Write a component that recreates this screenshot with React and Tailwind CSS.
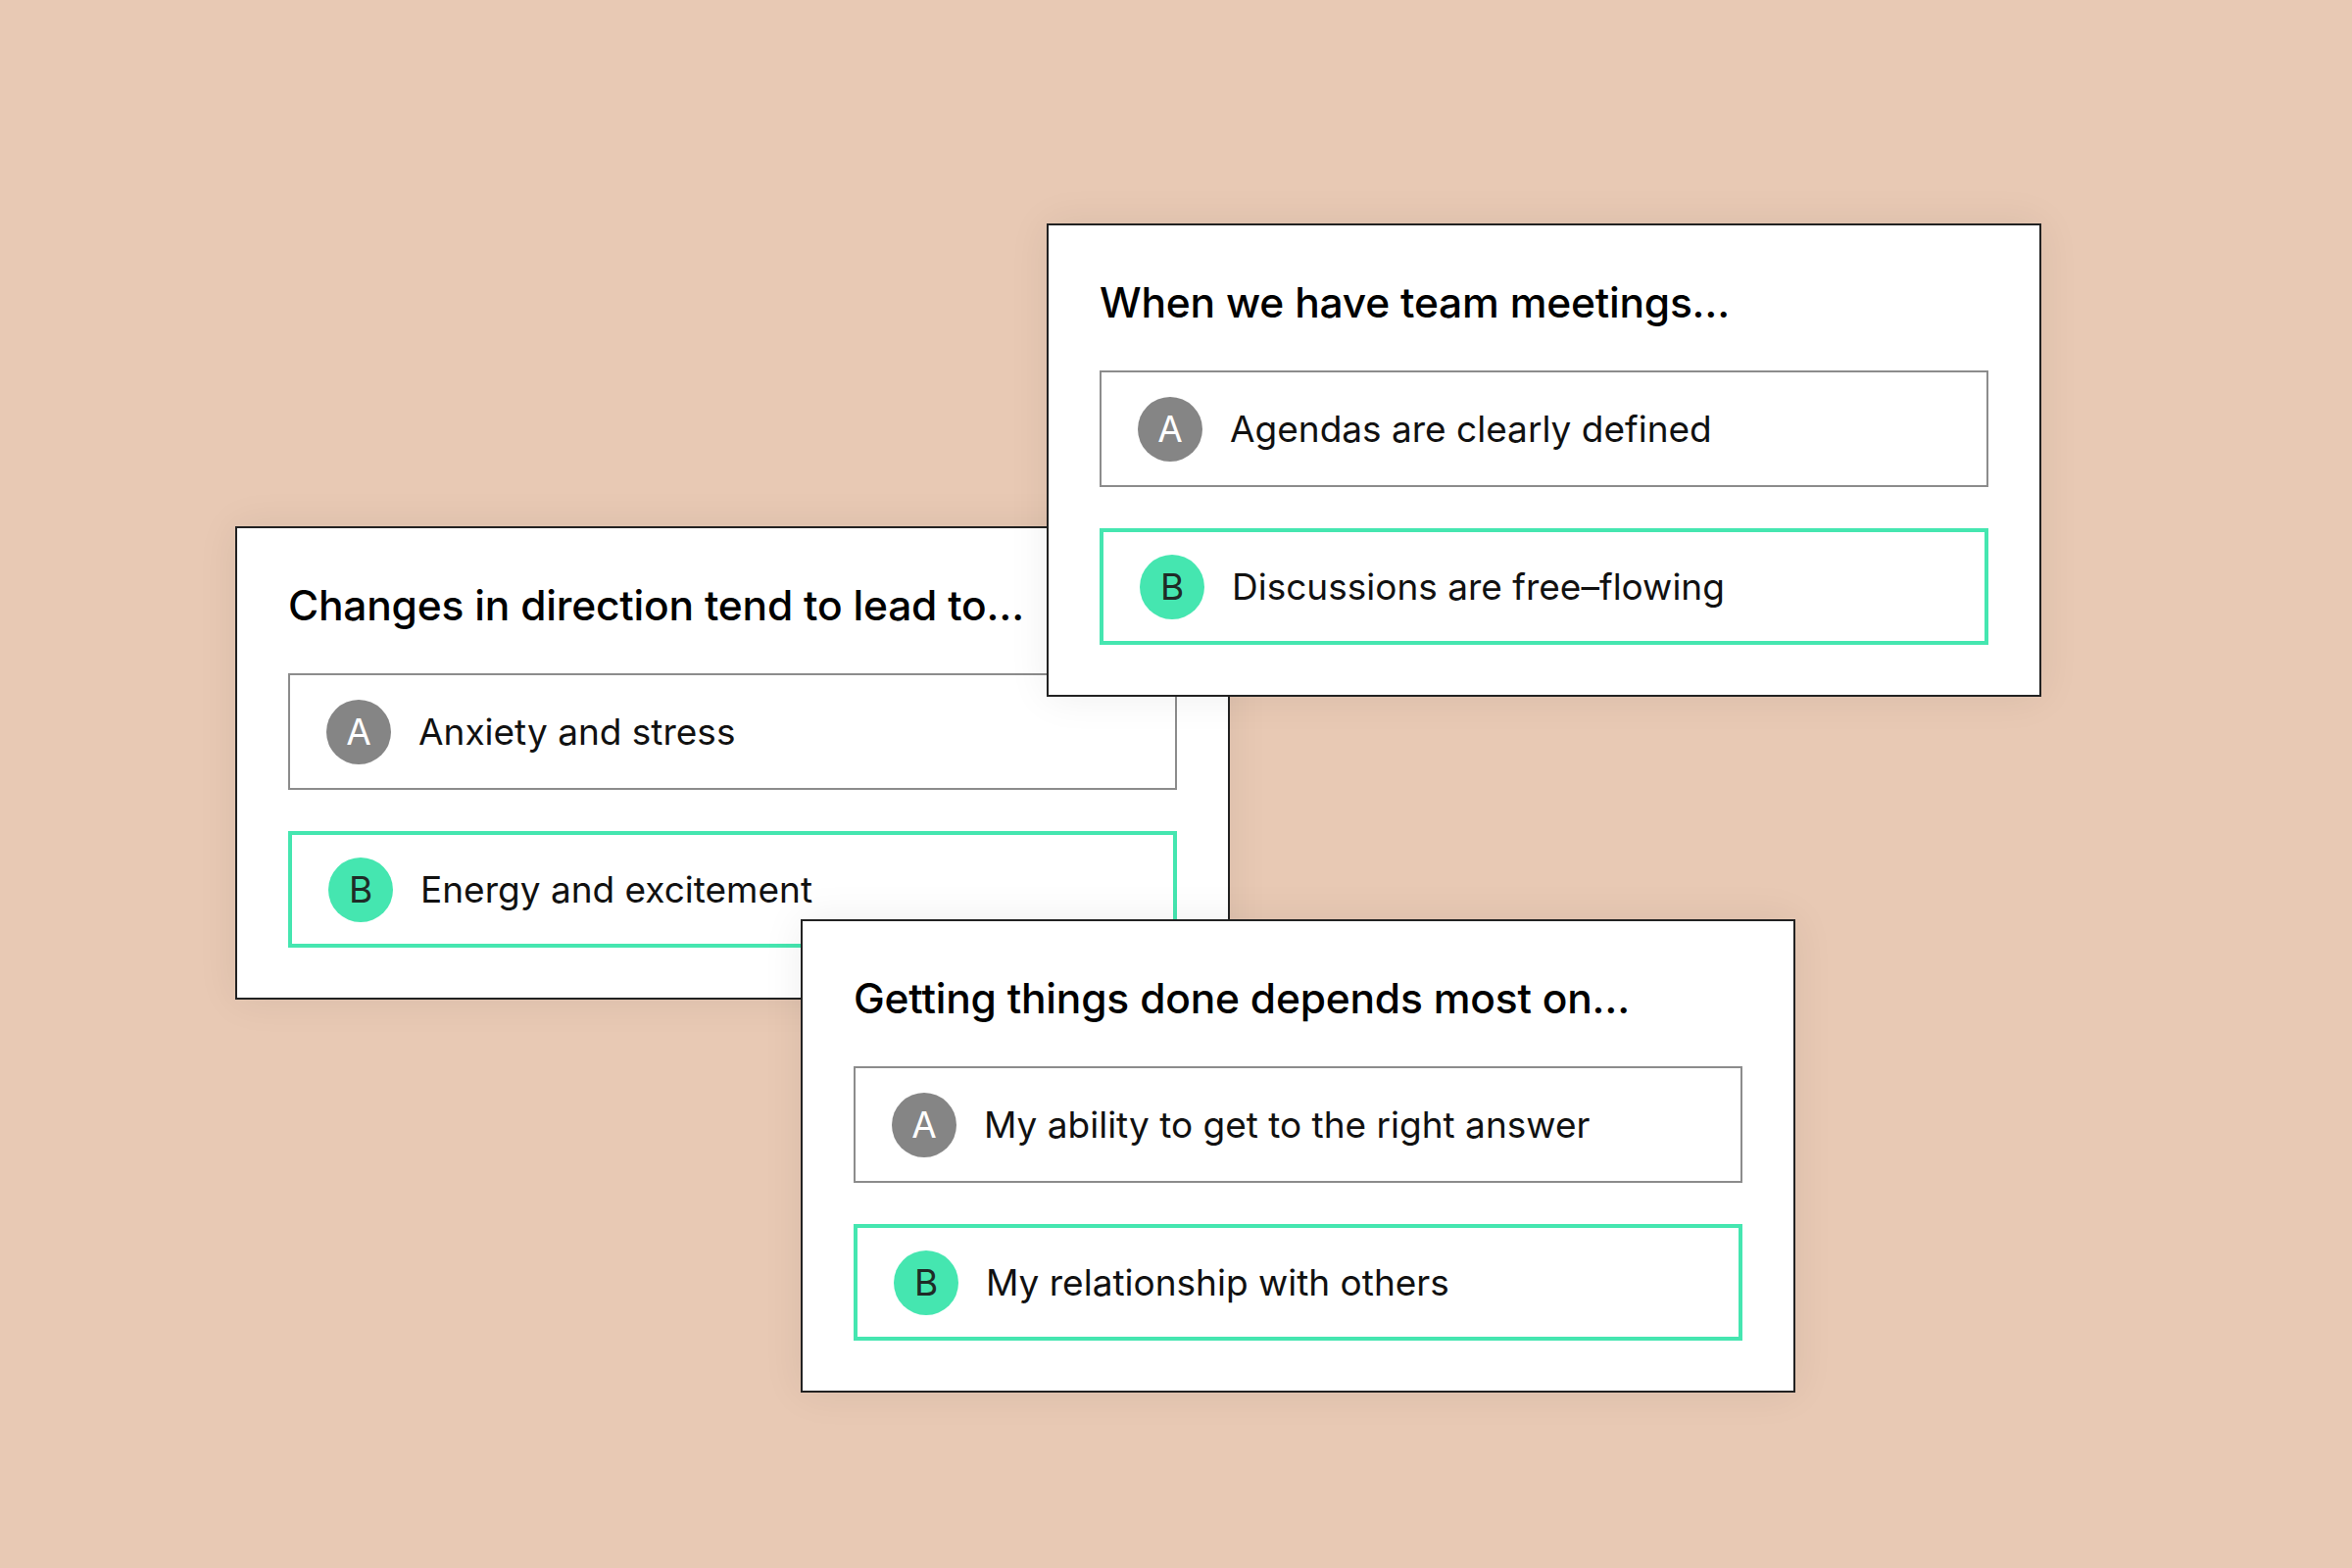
const cards = [
  {
    id: "direction",
    pos: "left-[240px] top-[537px] z-0",
    title: "Changes in direction tend to lead to…",
    a: "Anxiety and stress",
    b: "Energy and excitement",
  },
  {
    id: "meetings",
    pos: "left-[1068px] top-[228px] z-10",
    title: "When we have team meetings…",
    a: "Agendas are clearly defined",
    b: "Discussions are free–flowing",
  },
  {
    id: "done",
    pos: "left-[817px] top-[938px] z-10",
    title: "Getting things done depends most on…",
    a: "My ability to get to the right answer",
    b: "My relationship with others",
  },
];

function Option({ letter, text, picked }) {
  return (
    <div
      className={`h-[119px] flex items-center pl-[37px] ${
        picked ? "border-[4px] border-[#45e6b0]" : "border-2 border-[#8c8c8c]"
      }`}
    >
      <span
        className={`w-[66px] h-[66px] rounded-full flex items-center justify-center text-[37px] leading-none ${
          picked ? "bg-[#45e6b0] text-[#1f2b27]" : "bg-[#858585] text-white"
        }`}
      >
        {letter}
      </span>
      <span className="ml-[28px] text-[37px] leading-none text-[#111]">{text}</span>
    </div>
  );
}

function QuestionCard({ card }) {
  return (
    <div
      className={`absolute ${card.pos} w-[1015px] h-[483px] bg-white border-2 border-[#222] px-[52px] pt-[58px] shadow-[0_0_40px_rgba(0,0,0,0.07)]`}
    >
      <h3 className="h-[42px] text-[42.5px] leading-[42px] font-medium text-black tracking-[-0.005em] whitespace-nowrap">
        {card.title}
      </h3>
      <div className="mt-[48px] flex flex-col gap-[42px]">
        <Option letter="A" text={card.a} />
        <Option letter="B" text={card.b} picked />
      </div>
    </div>
  );
}

export default function App() {
  return (
    <div
      className="relative w-[2400px] h-[1600px] overflow-hidden bg-[#e8c9b4]"
      style={{ fontFamily: "Inter, 'Noto Sans', sans-serif" }}
    >
      {cards.map((c) => (
        <QuestionCard key={c.id} card={c} />
      ))}
    </div>
  );
}
